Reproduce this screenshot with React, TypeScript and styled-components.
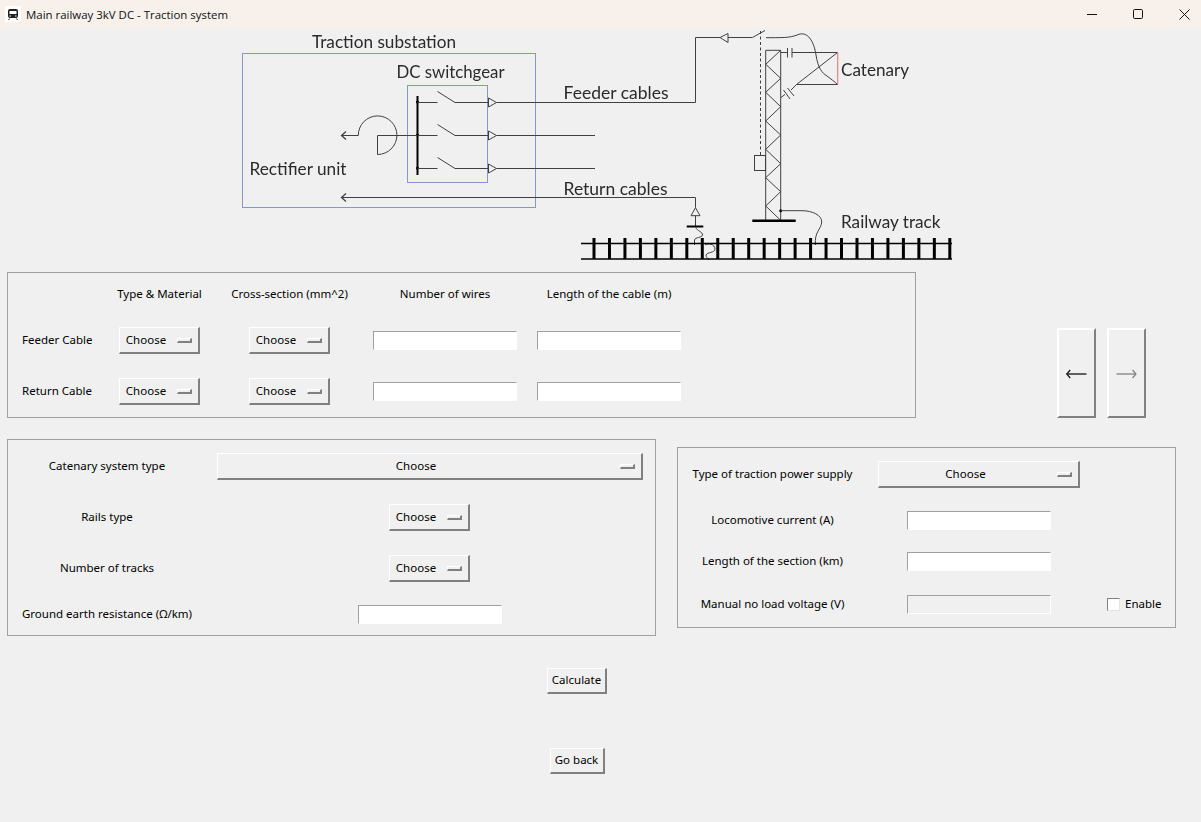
import React from "react";
import styled, { createGlobalStyle } from "styled-components";

const Global = createGlobalStyle`
  html, body { margin: 0; padding: 0; background: #f0f0f0; overflow: hidden; }
  * { box-sizing: border-box; }
`;

const Window = styled.div`
  width: 1201px;
  height: 822px;
  background: #f0f0f0;
  color: #000;
  font-family: "Noto Sans", sans-serif;
  font-size: 11.5px;
  display: flex;
  flex-direction: column;
`;

const TitleBar = styled.header`
  height: 28px;
  flex: none;
  background: #f7f0eb;
  display: flex;
  align-items: center;
  padding-left: 5px;
`;
const AppIcon = styled.span`
  width: 16px;
  height: 16px;
  background: #fff;
  display: flex;
  align-items: center;
  justify-content: center;
`;
const Title = styled.span`
  margin-left: 5px;
  font-family: "Open Sans", sans-serif;
  font-size: 11.45px;
  color: #111;
`;
const WindowControls = styled.div`
  margin-left: auto;
  display: flex;
  gap: 12px;
  height: 100%;
`;
const WindowControl = styled.span`
  width: 34px;
  display: flex;
  align-items: center;
  justify-content: center;
`;

const DiagramBox = styled.div`
  height: 235px;
  flex: none;
  padding-left: 240px;
`;
const DiagramSvg = styled.svg`
  display: block;
`;
const Soft = styled.g`
  filter: blur(0.25px);
`;
const Label = styled.text`
  font-family: Lato, sans-serif;
  font-size: 18px;
  fill: #2a2a2a;
`;

const CablesRow = styled.section`
  margin: 9px 0 0 7px;
  display: flex;
  align-items: flex-end;
`;
const Panel = styled.div<{ $w: number; $h: number; $mt?: number }>`
  width: ${(p) => p.$w}px;
  height: ${(p) => p.$h}px;
  margin-top: ${(p) => p.$mt ?? 0}px;
  border: 1px solid #a0a0a0;
  flex: none;
`;
const CablesGrid = styled.div`
  display: grid;
  grid-template-columns: 101px 101px 159px 152px 176px;
  grid-template-rows: 18px 27px 27px;
  row-gap: 24px;
  padding-top: 12px;
  align-items: center;
  justify-items: center;
`;
const RowName = styled.span`
  justify-self: start;
  padding: 0 0 2px 14px;
  white-space: nowrap;
`;
const Heading = styled.span`
  padding-bottom: 2px;
  white-space: nowrap;
`;

const Raised = styled.button`
  margin: 0;
  padding: 0;
  border-style: solid;
  border-width: 1px 2px 2px 1px;
  border-color: #fff #808080 #808080 #fff;
  background: #f0f0f0;
  color: #000;
  font: inherit;
`;
const Dropdown = styled(Raised)<{ $w: number }>`
  width: ${(p) => p.$w}px;
  height: 27px;
  display: flex;
  align-items: center;
`;
const DropText = styled.span`
  flex: 1;
  padding-bottom: 2px;
  text-align: center;
`;
const Indicator = styled.span`
  width: 15px;
  height: 5px;
  margin: 0 6px 0 5px;
  flex: none;
  border-style: solid;
  border-width: 1px 2px 2px 1px;
  border-color: #fff #808080 #808080 #fff;
  background: #f0f0f0;
`;
const Entry = styled.input<{ $off?: boolean }>`
  width: 144px;
  height: 19px;
  margin: 0;
  padding: 0;
  border-style: solid;
  border-width: 1px;
  border-color: #a0a0a0 #fff #fff #a0a0a0;
  background: ${(p) => (p.$off ? "#f0f0f0" : "#fff")};
  outline: none;
`;

const ArrowPair = styled.div`
  display: flex;
  gap: 11px;
  margin-left: 141px;
`;
const ArrowButton = styled(Raised)`
  width: 39px;
  height: 90px;
  padding-top: 2px;
  border-width: 2px;
  display: flex;
  align-items: center;
  justify-content: center;
`;

const FormsRow = styled.section`
  margin: 21px 0 0 7px;
  display: flex;
  align-items: flex-start;
  gap: 21px;
`;
const TrackGrid = styled.div`
  display: grid;
  grid-template-columns: 198px 447px;
  grid-template-rows: 27px 27px 27px 17px;
  row-gap: 24px;
  padding-top: 13px;
  align-items: center;
  justify-items: center;
`;
const TallText = styled.span`
  padding-bottom: 2px;
  white-space: nowrap;
`;
const SupplyRow = styled.div<{ $mt: number }>`
  display: grid;
  grid-template-columns: 189px 224px 84px;
  margin-top: ${(p) => p.$mt}px;
  align-items: center;
  justify-items: center;
`;
const CheckLabel = styled.label`
  display: flex;
  align-items: center;
  justify-self: start;
  margin-left: 16px;
  white-space: nowrap;
`;
const CheckBox = styled.span`
  width: 13px;
  height: 13px;
  margin-right: 5px;
  background: #fff;
  border-style: solid;
  border-width: 1px;
  border-color: #808080 #e4e4e4 #e4e4e4 #808080;
`;
const CheckText = styled.span`
  padding-bottom: 2px;
`;

const Actions = styled.section`
  width: 1154px;
  margin-top: 32px;
  display: flex;
  flex-direction: column;
  align-items: center;
  gap: 54px;
`;
const PlainButton = styled(Raised)<{ $w: number }>`
  width: ${(p) => p.$w}px;
  height: 26px;
  padding-bottom: 2px;
`;

const Choose = ({ w }: { w: number }) => (
  <Dropdown $w={w}>
    <DropText>Choose</DropText>
    <Indicator />
  </Dropdown>
);

const sleepers = Array.from({ length: 24 }, (_, i) => 594 + i * 15.47);
const zig = [
  [780.7, 50.3], [765.7, 64.3], [780.7, 78.3], [765.7, 92.3], [780.7, 106.7], [765.7, 121],
  [780.7, 135], [765.7, 149.3], [780.7, 163.7], [765.7, 177.7], [780.7, 191.7], [765.7, 206], [780.7, 220.3],
].map((p) => p.join(",")).join(" ");

const Diagram = () => (
  <DiagramSvg width={720} height={235} viewBox="240 28 720 235" fill="none" stroke="#404040" strokeWidth={1}>
    <g stroke="#1c3fa0" strokeDasharray="1 1">
      <rect x={242.5} y={53.5} width={293} height={154} />
      <rect x={407.5} y={85.5} width={80} height={97} />
    </g>
    <Soft>
      <Label x={312} y={48} stroke="none" textLength={144} lengthAdjust="spacingAndGlyphs">Traction substation</Label>
      <Label x={396.5} y={78} stroke="none" textLength={108} lengthAdjust="spacingAndGlyphs">DC switchgear</Label>
      <Label x={249.5} y={175} stroke="none" textLength={97} lengthAdjust="spacingAndGlyphs">Rectifier unit</Label>
      <Label x={563.5} y={99} stroke="none" textLength={105} lengthAdjust="spacingAndGlyphs">Feeder cables</Label>
      <Label x={563.5} y={195} stroke="none" textLength={104} lengthAdjust="spacingAndGlyphs">Return cables</Label>
      <Label x={841} y={76} stroke="none" textLength={68} lengthAdjust="spacingAndGlyphs">Catenary</Label>
      <Label x={841} y={228} stroke="none" textLength={99.5} lengthAdjust="spacingAndGlyphs">Railway track</Label>

      {/* busbar and feeders */}
      <line x1={417.5} y1={96} x2={417.5} y2={175} stroke="#000" strokeWidth={2} />
      {[102, 135, 168].map((y) => (
        <g key={y}>
          <circle cx={417.5} cy={y} r={1.6} fill="#000" stroke="none" />
          <path d={`M417.5 ${y + 0.5}H437.5M437.5 ${y - 10.5}L455 ${y + 0.5}H488.5`} />
          <path d={`M488.5 ${y - 4}V${y + 5}L496.5 ${y + 0.5}Z`} />
        </g>
      ))}
      <path d="M496.5 135.5H595M496.5 168.5H595" />
      <path d="M496.5 102.5H695.5V37.5H720M728 37.5H752.5L765 30.5" />
      <path d="M720 37.5L728 33.5V42.5Z" />
      <path d="M760.5 31V155" strokeDasharray="3 2.5" />
      <rect x={754.5} y={155.5} width={11} height={15} />

      {/* rectifier */}
      <path d="M341.5 135.5H358.3A19.3 19.3 0 1 1 377.5 154.5V135.5H417" />
      <path d="M346 131.5L341.5 135.5L346 139.5" strokeWidth={1.3} />

      {/* return */}
      <path d="M341.5 197.5H695.5V207.7" />
      <path d="M346 193.5L341.5 197.5L346 201.5" strokeWidth={1.3} />
      <path d="M695.5 207.7L691 215.7H700Z" />
      <path d="M695.5 215.7V226" />
      <line x1={686.7} y1={226.5} x2={703.3} y2={226.5} stroke="#000" strokeWidth={2} />
      <path d="M695.5 227C697 231 703 232 702.5 235C702 238 695 237 694.5 240V245" />
      <path d="M705 245C708 243 715 244 715 249C715 253 707 252 706 255C705.5 257 708 258 709 260" />

      {/* mast */}
      <path d="M765.7 220.3V50.3H780.7V220.3" />
      <polyline points={zig} />
      <line x1={752.3} y1={220.7} x2={795.7} y2={220.7} stroke="#000" strokeWidth={2.4} />
      <circle cx={780.7} cy={210.7} r={1.5} fill="#000" stroke="none" />
      <path d="M780.7 210.7H802C812 210.7 822 215 821.7 222C821.5 229 814 232 815.5 245" />

      {/* arms */}
      <path d="M780.7 52.5H787M792 52.5H837.5" />
      <path d="M787.5 48V57.5M792 48V57.5" />
      <path d="M837.5 52.5L796.5 84.5M796.5 84.5H837.5" />
      <path d="M780.7 97.7L785 94.5M791 90L796.5 84.5" />
      <path d="M783.5 90L790 99M787.5 88L794 96" />
      <line x1={837.7} y1={52.5} x2={837.7} y2={84.5} stroke="#f08080" strokeWidth={1.2} />
      <path d="M766 37.7C780 37.7 790 38 797 35C808 30 814 42 816 55C818 68 822 73 827 76C831 79 835 82 837.5 84.5" />

      {/* track */}
      <g stroke="#000">
        <line x1={581} y1={243.5} x2={952} y2={243.5} strokeWidth={1.7} />
        <line x1={581} y1={259} x2={952} y2={259} strokeWidth={1.7} />
        {sleepers.map((x) => (
          <line key={x} x1={x} y1={238} x2={x} y2={259} strokeWidth={3} />
        ))}
      </g>
    </Soft>
  </DiagramSvg>
);

export default function App() {
  return (
    <>
      <Global />
      <Window>
        <TitleBar>
          <AppIcon>
            <svg width="12" height="12" viewBox="0 0 12 12">
              <path d="M3 1h6a2 2 0 0 1 2 2v5a2 2 0 0 1-2 2H3a2 2 0 0 1-2-2V3a2 2 0 0 1 2-2z" fill="#222" />
              <rect x="2.5" y="3" width="7" height="3" fill="#fff" />
              <rect x="2.5" y="7.5" width="1.5" height="1" fill="#fff" />
              <rect x="8" y="7.5" width="1.5" height="1" fill="#fff" />
              <path d="M2.5 10.5L1.5 12M9.5 10.5L10.5 12" stroke="#222" />
            </svg>
          </AppIcon>
          <Title>Main railway 3kV DC - Traction system</Title>
          <WindowControls>
            <WindowControl>
              <svg width="10" height="10" viewBox="0 0 10 10"><path d="M0 5.5H10" stroke="#111" /></svg>
            </WindowControl>
            <WindowControl>
              <svg width="10" height="10" viewBox="0 0 10 10"><rect x=".5" y=".5" width="9" height="9" rx="1.2" fill="none" stroke="#111" /></svg>
            </WindowControl>
            <WindowControl>
              <svg width="11" height="11" viewBox="0 0 11 11"><path d="M.5 .5L10.5 10.5M10.5 .5L.5 10.5" stroke="#111" /></svg>
            </WindowControl>
          </WindowControls>
        </TitleBar>

        <DiagramBox>
          <Diagram />
        </DiagramBox>

        <CablesRow>
          <Panel $w={909} $h={146}>
            <CablesGrid>
              <span />
              <Heading>Type &amp; Material</Heading>
              <Heading>Cross-section (mm^2)</Heading>
              <Heading>Number of wires</Heading>
              <Heading>Length of the cable (m)</Heading>

              <RowName>Feeder Cable</RowName>
              <Choose w={81} />
              <Choose w={81} />
              <Entry />
              <Entry />

              <RowName>Return Cable</RowName>
              <Choose w={81} />
              <Choose w={81} />
              <Entry />
              <Entry />
            </CablesGrid>
          </Panel>
          <ArrowPair>
            <ArrowButton aria-label="previous">
              <svg width="22" height="10" viewBox="0 0 22 10" fill="none" stroke="#111">
                <path d="M.7 5H20.5" strokeWidth="1.3" />
                <path d="M4.2 1L.7 5L4.2 9" strokeWidth="1.2" />
              </svg>
            </ArrowButton>
            <ArrowButton aria-label="next">
              <svg width="22" height="10" viewBox="0 0 22 10" fill="none" stroke="#808080">
                <path d="M.5 5H20" strokeWidth="1.3" />
                <path d="M16.5 1L20 5L16.5 9" strokeWidth="1.2" />
              </svg>
            </ArrowButton>
          </ArrowPair>
        </CablesRow>

        <FormsRow>
          <Panel $w={649} $h={197}>
            <TrackGrid>
              <TallText>Catenary system type</TallText>
              <Choose w={426} />
              <TallText>Rails type</TallText>
              <Choose w={81} />
              <TallText>Number of tracks</TallText>
              <Choose w={81} />
              <TallText>Ground earth resistance (Ω/km)</TallText>
              <Entry />
            </TrackGrid>
          </Panel>
          <Panel $w={499} $h={181} $mt={8}>
            <SupplyRow $mt={13}>
              <TallText>Type of traction power supply</TallText>
              <Choose w={202} />
            </SupplyRow>
            <SupplyRow $mt={23}>
              <TallText>Locomotive current (A)</TallText>
              <Entry />
            </SupplyRow>
            <SupplyRow $mt={22}>
              <TallText>Length of the section (km)</TallText>
              <Entry />
            </SupplyRow>
            <SupplyRow $mt={24}>
              <TallText>Manual no load voltage (V)</TallText>
              <Entry $off disabled />
              <CheckLabel>
                <CheckBox />
                <CheckText>Enable</CheckText>
              </CheckLabel>
            </SupplyRow>
          </Panel>
        </FormsRow>

        <Actions>
          <PlainButton $w={60}>Calculate</PlainButton>
          <PlainButton $w={55}>Go back</PlainButton>
        </Actions>
      </Window>
    </>
  );
}
